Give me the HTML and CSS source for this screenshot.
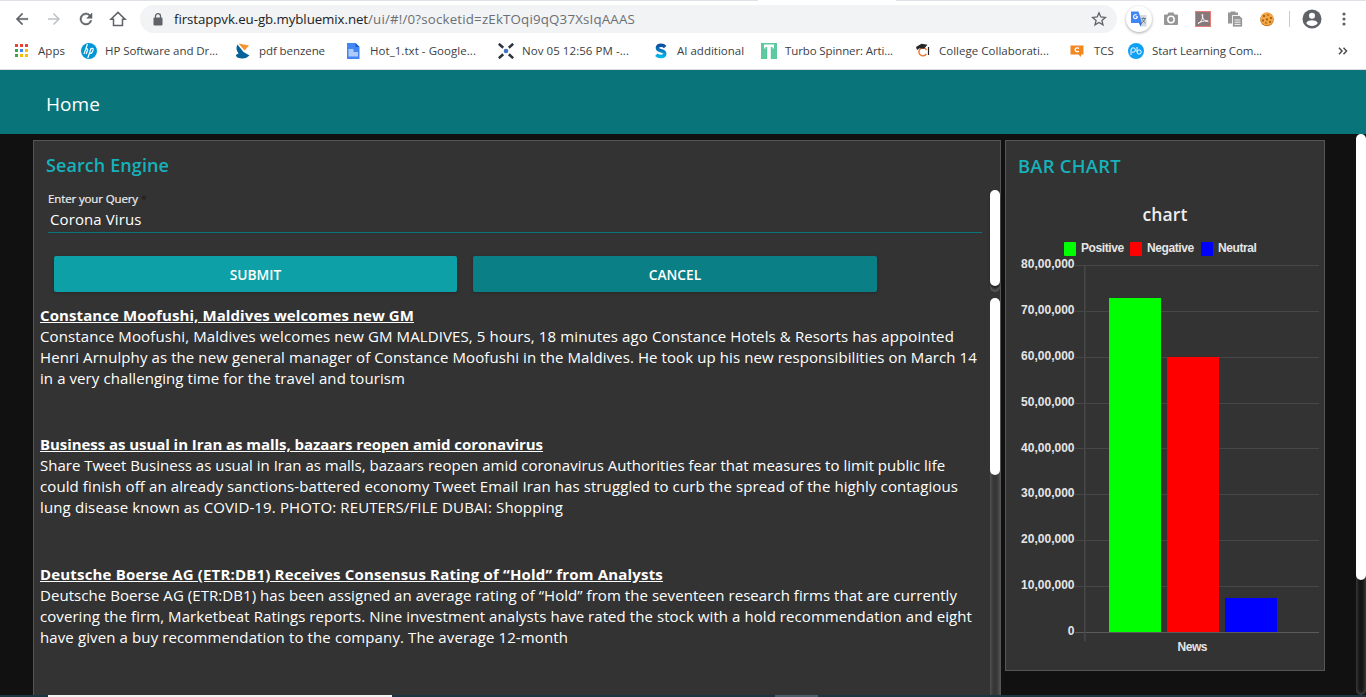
FILE: index.html
```html
<!DOCTYPE html>
<html lang="en">
<head>
<meta charset="utf-8">
<title>Home</title>
<link rel="stylesheet" href="styles.css">
</head>
<body>
<div class="screen">
<div class="browser">
  <div class="tabstrip"><i></i><i></i></div>
  <div class="toolbar">
    <div class="nav">
      <svg viewBox="0 0 24 24" class="ic"><path d="M20 11H7.8l5.6-5.6L12 4l-8 8 8 8 1.4-1.4L7.8 13H20z" stroke="#5f6368" stroke-width=".4" fill="#5f6368"/></svg>
      <svg viewBox="0 0 24 24" class="ic"><path d="M4 11h12.2l-5.6-5.6L12 4l8 8-8 8-1.4-1.4 5.6-5.6H4z" fill="#bdc1c6"/></svg>
      <svg viewBox="0 0 24 24" class="ic"><path d="M17.65 6.35A8 8 0 1 0 19.73 14h-2.08A6 6 0 1 1 12 6c1.66 0 3.14.69 4.22 1.78L13 11h7V4z" stroke="#5f6368" stroke-width=".7" fill="#5f6368"/></svg>
      <svg viewBox="0 0 24 24" class="ic"><path d="M12 3.2L2.6 12.3H6V20.8h12v-8.500h3.400z" fill="none" stroke="#5f6368" stroke-width="2"/></svg>
    </div>
    <div class="address">
      <svg viewBox="0 0 10 13" class="lock"><rect x=".5" y="4.500" width="9" height="8" rx="1" fill="#5f6368"/><path d="M2.500 5V3.200a2.500 2.500 0 0 1 5 0V5" fill="none" stroke="#5f6368" stroke-width="1.300"/></svg>
      <span class="host">firstappvk.eu-gb.mybluemix.net</span><span class="path">/ui/#!/0?socketid=zEkTOqi9qQ37XsIqAAAS</span>
      <svg viewBox="0 0 16 16" class="star"><path d="M8 1.800l1.800 4.200 4.600.4-3.500 3 1.100 4.500L8 11.500l-4 2.400 1.100-4.500-3.500-3 4.600-.4z" fill="none" stroke="#5f6368" stroke-width="1.300"/></svg>
    </div>
    <div class="extensions">
      <span class="bubble"><svg viewBox="0 0 16 16" width="16" height="16"><path d="M6 4h9.500v11.500H9.500z" fill="#d5d8dc"/><path d="M0 .5h7.500L11 12H0z" fill="#4285f4"/><path d="M8 12h3l-1.500 3.500z" fill="#3367d6"/><path d="M4.700 5.800H6.500a2 2 0 1 1-.8-1.800" fill="none" stroke="#fff" stroke-width="1.100"/><path d="M10.500 7.500h4.500M12.600 6.500v1M14 7.500c-.5 2-1.800 3.500-2.800 4M11.500 8.500c.5 1.500 1.500 2.500 3 3.500" fill="none" stroke="#607d8b" stroke-width="1"/></svg></span>
      <svg viewBox="0 0 16 16" class="ext"><path d="M1 4.500q0-1 1-1h2.500L5.500 1.500h5l1 2H14q1 0 1 1V13q0 1-1 1H2q-1 0-1-1z" fill="#969696"/><circle cx="8" cy="8.500" r="3.200" fill="none" stroke="#fff" stroke-width="1.500"/></svg>
      <svg viewBox="0 0 16 16" class="ext"><rect x=".5" y=".5" width="15" height="15" fill="#85797b" stroke="#e77c78"/><path d="M3 12.500c4-2 5-6 4.700-9-.8-1-.8.800 0 3 1 2.500 3 4 5 4 1 0 .5-1-1-.8-3 .2-6 .8-8.700 2.800z" fill="none" stroke="#fff" stroke-width="1"/></svg>
      <svg viewBox="0 0 16 16" class="ext"><path d="M1 1.500h2.500V.5h5v1H11V4H5.500v8.500H1z" fill="#969696"/><path d="M5.500 4.500h7l3 3V16h-10z" fill="#969696" stroke="#fff" stroke-width=".8"/><path d="M7.500 9h6M7.500 11.200h6M7.500 13.400h6" stroke="#fff" stroke-width=".9"/></svg>
      <svg viewBox="0 0 16 16" class="ext"><circle cx="8" cy="8.500" r="6.800" fill="#c06f18"/><circle cx="8" cy="7.800" r="6.500" fill="#f3a640"/><g fill="#8a4510"><circle cx="5" cy="5" r=".9"/><circle cx="9" cy="4" r=".8"/><circle cx="12" cy="7" r=".9"/><circle cx="8" cy="8.500" r=".9"/><circle cx="4" cy="9.500" r=".9"/><circle cx="11" cy="11" r=".9"/><circle cx="7" cy="12" r=".8"/></g></svg>
      <i class="divider"></i>
      <svg viewBox="0 0 20 20" class="account"><circle cx="10" cy="10" r="9.500" fill="#5f6368"/><circle cx="10" cy="6.800" r="3" fill="#fff"/><path d="M4.200 14c1-2 3.600-2.700 5.800-2.700s4.800.7 5.800 2.700a7 7 0 0 1-11.600 0z" fill="#fff"/></svg>
      <svg viewBox="0 0 4 14" class="dots" fill="#5f6368"><circle cx="2" cy="2" r="1.600"/><circle cx="2" cy="7" r="1.600"/><circle cx="2" cy="12" r="1.600"/></svg>
    </div>
  </div>
  <div class="bookmarks">
    <a class="apps"><svg viewBox="0 0 16 16"><path d="M0 1h3v3H0zM5 1h3v3H5zM10 1h3v3h-3z" fill="#ea4335"/><path d="M0 6h3v3H0zM0 11h3v3H0z" fill="#34a853"/><path d="M5 6h3v3H5z" fill="#4285f4"/><path d="M10 6h3v3h-3zM5 11h3v3H5zM10 11h3v3h-3z" fill="#fbbc05"/></svg><span>Apps</span></a>
    <a class="hp"><svg viewBox="0 0 16 16"><circle cx="8" cy="8" r="8" fill="#0096d6"/><path d="M6.500 1L3 11M4.800 6.200q2.200-1 1.800.8L5.200 11M10 5.500L6.800 15M9.700 5.600q3.300-1 2.300 1.800-.9 3.600-3.800 2.800" fill="none" stroke="#fff" stroke-width="1.200"/></svg><span>HP Software and Dr...</span></a>
    <a class="pdf"><svg viewBox="0 0 16 16"><path d="M3.500.5l10.500 2-4.500 5z" fill="#f7942d"/><path d="M2.500 1.500L8.500 9l6 3.500q-3.500 3.500-8 3Q1 15 .8 12l2.700-1.500Q0 6 2.500 1.500z" fill="#05639a"/></svg><span>pdf benzene</span></a>
    <a class="hot"><svg viewBox="0 0 16 16"><path d="M1 0h8.500l4 4v12H1z" fill="#4285f4"/><path d="M9.500 0l4 4h-4z" fill="#1a5ad0"/><path d="M2.500 6h5v3H12v4.500H2.500z" fill="#aecbfa"/></svg><span>Hot_1.txt - Google...</span></a>
    <a class="nov"><svg viewBox="0 0 16 16"><path d="M0.800.8l4.400 4M15.200.8l-4.400 4M.8 15.200l4.400-4M15.200 15.200l-4.400-4" stroke="#2c3440" stroke-width="2.600"/><circle cx="8" cy="8" r="2.300" fill="#4472c4"/></svg><span>Nov 05 12:56 PM -...</span></a>
    <a class="ai"><svg viewBox="0 0 16 16"><defs><linearGradient id="s" x2="0" y2="1"><stop stop-color="#0b4ea2"/><stop offset="1" stop-color="#00b4e6"/></linearGradient></defs><path d="M12.200 4Q10.500 2.200 8 2.200q-3.600 0-3.600 2.600Q4.400 7 8 7.700q3.800.8 3.700 3.200-.2 2.700-3.700 2.700-3 0-4.700-1.800" fill="none" stroke="url(#s)" stroke-width="3.500"/></svg><span>AI additional</span></a>
    <a class="turbo"><svg viewBox="0 0 16 16"><path d="M0 0h16v16H0z" fill="#5cc99f"/><path d="M3 1.500h10v4h-1.500V4H9.800v12H6.200V4H4.500v1.500H3z" fill="#fff"/></svg><span>Turbo Spinner: Arti...</span></a>
    <a class="college"><svg viewBox="0 0 16 16"><path d="M11.500 7a4 4 0 1 0-.2 4" fill="none" stroke="#ef7b3a" stroke-width="1.500"/><path d="M13.500 4v8" stroke="#222" stroke-width="1.200"/><path d="M1 4L6.500.8l6 1-3.500 4-4.500-.5L2 7z" fill="#262626"/></svg><span>College Collaborati...</span></a>
    <a class="tcs"><svg viewBox="0 0 16 16"><path d="M.5 2.500h13v9H11V14l-2.500-2.500h-8z" fill="#f5871f"/><path d="M9 5.200q-3.800-1-3.800 1.500T9 8.400" fill="none" stroke="#fff" stroke-width="1.400"/></svg><span>TCS</span></a>
    <a class="learn"><svg viewBox="0 0 16 16"><circle cx="8" cy="8" r="8" fill="#0fa0f5"/><path d="M3 12V7a2.200 2.200 0 1 1 2.200 2.200H4M9 4v5" fill="none" stroke="#fff"/><circle cx="11.100" cy="9" r="2.100" fill="none" stroke="#fff"/></svg><span>Start Learning Com...</span></a>
    <svg class="more" viewBox="0 0 10 8"><path d="M1 .8L4 4 1 7.200M5.500.8l3 3.200-3 3.200" fill="none" stroke="#4b4f54" stroke-width="1.500"/></svg>
  </div>
</div>

<header class="appbar">Home</header>

<main class="board">
  <section class="panel search">
    <h2>Search Engine</h2>
    <div class="form">
      <div class="fields">
        <label>Enter your Query <em>*</em></label>
        <div class="query">Corona Virus</div>
        <div class="buttons"><button class="submit">SUBMIT</button><button class="cancel">CANCEL</button></div>
      </div>
      <div class="scroll"><i class="thumb"></i></div>
    </div>
    <div class="results">
      <div class="list">
        <article>
          <h3 class="a1">Constance Moofushi, Maldives welcomes new GM</h3>
          <p><span class="a2">Constance Moofushi, Maldives welcomes new GM MALDIVES, 5 hours, 18 minutes ago Constance Hotels &amp; Resorts has appointed</span>
          <span class="a3">Henri Arnulphy as the new general manager of Constance Moofushi in the Maldives. He took up his new responsibilities on March 14</span>
          <span class="a4">in a very challenging time for the travel and tourism</span></p>
        </article>
        <article>
          <h3 class="b1">Business as usual in Iran as malls, bazaars reopen amid coronavirus</h3>
          <p><span class="b2">Share Tweet Business as usual in Iran as malls, bazaars reopen amid coronavirus Authorities fear that measures to limit public life</span>
          <span class="b3">could finish off an already sanctions-battered economy Tweet Email Iran has struggled to curb the spread of the highly contagious</span>
          <span class="b4">lung disease known as COVID-19. PHOTO: REUTERS/FILE DUBAI: Shopping</span></p>
        </article>
        <article>
          <h3 class="c1">Deutsche Boerse AG (ETR:DB1) Receives Consensus Rating of “Hold” from Analysts</h3>
          <p><span class="c2">Deutsche Boerse AG (ETR:DB1) has been assigned an average rating of “Hold” from the seventeen research firms that are currently</span>
          <span class="c3">covering the firm, Marketbeat Ratings reports. Nine investment analysts have rated the stock with a hold recommendation and eight</span>
          <span class="c4">have given a buy recommendation to the company. The average 12-month</span></p>
        </article>
      </div>
      <div class="scroll"><i class="thumb"></i></div>
    </div>
  </section>

  <section class="panel stats">
    <h2>BAR CHART</h2>
    <h4>chart</h4>
    <div class="legend"><span class="pos">Positive</span><span class="neg">Negative</span><span class="neu">Neutral</span></div>
    <svg class="plot" width="318" height="410" viewBox="1006 256 318 410">
      <path d="M1075 265.500H1319M1075 311.500H1319M1075 357.500H1319M1075 403.500H1319M1075 448.500H1319M1075 494.500H1319M1075 540.500H1319M1075 586.500H1319" stroke="#474747"/>
      <path d="M1075 632.500H1319" stroke="#5b5b5b"/>
      <path d="M1084.800 265V641.500" stroke="#474747" stroke-width="1.600"/>
      <path d="M1109 298h52v334h-52z" fill="#0f0"/>
      <path d="M1167 357h52v275h-52z" fill="#f00"/>
      <path d="M1225 598h52v34h-52z" fill="#00f"/>
      <g class="ticks">
        <text x="1074.500" y="268">80,00,000</text><text x="1074.500" y="314">70,00,000</text><text x="1074.500" y="360">60,00,000</text><text x="1074.500" y="406">50,00,000</text><text x="1074.500" y="452">40,00,000</text><text x="1074.500" y="497">30,00,000</text><text x="1074.500" y="543">20,00,000</text><text x="1074.500" y="589">10,00,000</text><text x="1074.500" y="635">0</text>
        <text x="1207.500" y="651" textLength="30">News</text>
      </g>
    </svg>
  </section>
  <div class="scroll page"><i class="thumb"></i></div>
</main>

<footer class="taskbar"><i class="searchbox"></i><i class="active"></i></footer>
</div>
</body>
</html>
```
FILE: styles.css
```css
* { box-sizing: border-box; }
body { margin: 0; background: #111; font-family: "Open Sans", sans-serif; }
svg { display: block; flex: none; }
h2, h3, h4, p { margin: 0; }

.screen { width: 1366px; height: 697px; overflow: hidden; display: flex; flex-direction: column; }

/* Browser chrome */
.browser { height: 70px; flex: none; background: #fff; border-bottom: 1px solid #dadce0; }
.tabstrip { height: 1px; display: flex; justify-content: space-between; }
.tabstrip i { width: 758px; background: #dee1e6; }
.tabstrip i + i { width: 470px; }
.toolbar { height: 36px; display: flex; align-items: center; }
.nav { width: 140px; padding-left: 13px; display: flex; gap: 14px; }
.ic { width: 18px; height: 18px; }
.address { width: 977px; height: 28px; border-radius: 14px; background: #f1f3f4; display: flex; align-items: center; padding: 0 10px 0 13px; font-size: 13.3px; white-space: pre; }
.lock { width: 10px; height: 13px; margin-right: 11px; }
.host { color: #202124; letter-spacing: -.081px; }
.path { color: #6b6f74; letter-spacing: .184px; }
.star { width: 16px; height: 16px; margin-left: auto; }
.extensions { display: flex; align-items: center; padding-left: 9px; }
.bubble { width: 26px; height: 26px; margin-right: 11px; border-radius: 50%; display: grid; place-items: center; background: #fff; box-shadow: 0 1px 3px rgba(0, 0, 0, .35); }
.ext { width: 16px; height: 16px; margin-right: 16px; }
.divider { width: 1px; height: 16px; margin: 0 12px 0 -2px; background: #c8cacd; }
.account { width: 20px; height: 20px; margin-right: 20px; }
.dots { width: 4px; height: 14px; }

.bookmarks { height: 28px; padding-left: 15px; display: grid; align-items: center; grid-template-columns: 66px 154px 111px 152px 155px 108px 154px 155px 58px 210px 10px; font-size: 11.5px; color: #3c4043; }
.bookmarks a { display: flex; align-items: center; gap: 8px; white-space: nowrap; }
.bookmarks a span { padding-bottom: 2px; }
.bookmarks a svg { width: 16px; height: 16px; }
.bookmarks .apps { gap: 7px; letter-spacing: .043px; }
.hp, .pdf { letter-spacing: -.077px; }
.hot { letter-spacing: .053px; }
.nov { letter-spacing: .061px; }
.turbo { letter-spacing: -.118px; }
.college { letter-spacing: .018px; }
.learn { letter-spacing: -.107px; }
.more { width: 10px; height: 8px; }

/* Dashboard */
.appbar { height: 64px; flex: none; padding-left: 46px; line-height: 69px; background: #097479; color: #fff; font-size: 19px; letter-spacing: .074px; }
.board { height: 561px; flex: none; padding: 6px 0 0 33px; display: flex; align-items: flex-start; gap: 4px; background: #111; }
.panel { background: #333; border: 1px solid #555; color: #fff; }
.panel h2 { height: 49px; padding-left: 12px; line-height: 49px; color: #16b2bb; font-size: 18px; font-weight: 600; letter-spacing: .09px; }
.search { width: 968px; height: 600px; }
.stats { width: 320px; height: 531px; }
.stats h2 { font-size: 18.4px; letter-spacing: .25px; }

.scroll { width: 10px; flex: none; border-radius: 5px; background: #333; box-shadow: inset 0 0 5px #777; }
.thumb { display: block; border-radius: 5px; background: #fff; }
.form { height: 102px; display: flex; }
.form .scroll { margin-left: 8px; }
.form .thumb { height: 96px; box-shadow: 0 2px 2px #222; }
.fields { width: 948px; padding-left: 14px; }
.fields label { display: block; height: 18px; line-height: 18px; font-size: 11.5px; letter-spacing: -.127px; -webkit-text-stroke: .2px #eee; color: #eee; }
.fields em { color: #1c1c1c; font-style: normal; -webkit-text-stroke: 0; }
.query { height: 25px; padding-left: 2px; line-height: 23px; border-bottom: 1px solid #097479; font-size: 15px; letter-spacing: .1px; }
.buttons { display: flex; gap: 16px; padding: 23px 0 0 6px; }
.buttons button { height: 36px; padding: 0; border: 0; border-radius: 2px; color: #fff; font: 600 13.8px "Open Sans", sans-serif; box-shadow: 0 1px 3px rgba(0, 0, 0, .25); }
.buttons .submit { width: 403px; background: #0ea0a7; }
.buttons .cancel { width: 404px; background: #0b7f86; }

.results { height: 442px; padding-top: 6px; display: flex; }
.list { width: 956px; padding: 7px 0 0 6px; font-size: 15px; line-height: 21px; white-space: nowrap; }
.results .thumb { height: 177px; }
article { height: 129px; }
article + article { height: 130px; }
article h3 { font-size: 15px; font-weight: 700; text-decoration: underline; }
article span { display: block; }
.a1 { letter-spacing: .096px; }
.a2 { letter-spacing: .117px; }
.a3 { letter-spacing: .093px; }
.a4 { letter-spacing: .085px; }
.b1 { letter-spacing: -.056px; }
.b3 { letter-spacing: .097px; }
.b4 { letter-spacing: .13px; }
.c1 { letter-spacing: .173px; }
.c2 { letter-spacing: .058px; }
.c3 { letter-spacing: .07px; }
.c4 { letter-spacing: .116px; }

/* Bar chart */
.stats h4 { height: 49px; line-height: 49px; text-align: center; font-size: 17.5px; font-weight: 600; color: #eee; letter-spacing: .113px; }
.legend { height: 17px; display: flex; align-items: flex-start; padding: 0 0 0 58px; font: bold 12px/18px "Liberation Sans", sans-serif; color: #e5e5e5; white-space: nowrap; }
.legend span { display: flex; gap: 5px; width: 66px; letter-spacing: -.4px; }
.legend .neg { width: 71px; }
.legend span::before { content: ""; width: 12px; height: 14px; margin-top: 3px; border-radius: 1px; background: #0f0; }
.legend .neg::before { background: #f00; }
.legend .neu::before { background: #00f; }
.ticks { font: bold 12px "Liberation Sans", sans-serif; fill: #e5e5e5; text-anchor: end; }

.page { height: 561px; margin: -6px 0 0 27px; background: #111; box-shadow: inset 0 0 5px #666; }
.page .thumb { height: 446px; }

.taskbar { height: 2px; flex: none; display: flex; background: #1c3545; }
.searchbox { width: 344px; margin-left: 48px; background: #f2f2f2; }
.active { width: 43px; margin-left: 383px; background: #4d5c69; }
```
